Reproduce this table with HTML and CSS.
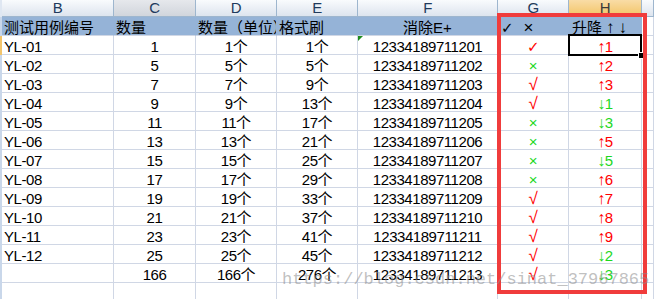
FILE: index.html
```html
<!DOCTYPE html>
<html lang="zh">
<head>
<meta charset="utf-8">
<title>Sheet</title>
<link rel="stylesheet" href="styles.css">
</head>
<body>
<div class="sheet">
  <div class="row colhead">
    <div class="cell">B</div><div class="cell hov">C</div><div class="cell">D</div><div class="cell">E</div><div class="cell">F</div><div class="cell">G</div><div class="cell sel">H</div><div class="cell"></div>
  </div>
  <div class="row head">
    <div class="cell">测试用例编号</div>
    <div class="cell">数量</div>
    <div class="cell">数量（单位）</div>
    <div class="cell">格式刷</div>
    <div class="cell ctr">消除E+</div>
    <div class="cell gh"><span class="tick">✓</span><span class="cross">×</span></div>
    <div class="cell hh">升降<b class="ar">↑</b><b class="ar">↓</b></div>
    <div class="cell plain"></div>
  </div>

  <div class="row active">
    <div class="cell">YL-01</div><div class="cell ctr">1</div><div class="cell ctr">1个</div><div class="cell ctr">1个</div><div class="cell ctr err">12334189711201</div><div class="cell ctr red"><span class="tick">✓</span></div><div class="cell ctr red"><span class="ar">↑</span>1</div><div class="cell"></div>
  </div>
  <div class="row">
    <div class="cell">YL-02</div><div class="cell ctr">5</div><div class="cell ctr">5个</div><div class="cell ctr">5个</div><div class="cell ctr">12334189711202</div><div class="cell ctr green">×</div><div class="cell ctr red"><span class="ar">↑</span>2</div><div class="cell"></div>
  </div>
  <div class="row">
    <div class="cell">YL-03</div><div class="cell ctr">7</div><div class="cell ctr">7个</div><div class="cell ctr">9个</div><div class="cell ctr">12334189711203</div><div class="cell ctr red ok">√</div><div class="cell ctr red"><span class="ar">↑</span>3</div><div class="cell"></div>
  </div>
  <div class="row">
    <div class="cell">YL-04</div><div class="cell ctr">9</div><div class="cell ctr">9个</div><div class="cell ctr">13个</div><div class="cell ctr">12334189711204</div><div class="cell ctr red ok">√</div><div class="cell ctr green"><span class="ar">↓</span>1</div><div class="cell"></div>
  </div>
  <div class="row">
    <div class="cell">YL-05</div><div class="cell ctr">11</div><div class="cell ctr">11个</div><div class="cell ctr">17个</div><div class="cell ctr">12334189711205</div><div class="cell ctr green">×</div><div class="cell ctr green"><span class="ar">↓</span>3</div><div class="cell"></div>
  </div>
  <div class="row">
    <div class="cell">YL-06</div><div class="cell ctr">13</div><div class="cell ctr">13个</div><div class="cell ctr">21个</div><div class="cell ctr">12334189711206</div><div class="cell ctr green">×</div><div class="cell ctr red"><span class="ar">↑</span>5</div><div class="cell"></div>
  </div>
  <div class="row">
    <div class="cell">YL-07</div><div class="cell ctr">15</div><div class="cell ctr">15个</div><div class="cell ctr">25个</div><div class="cell ctr">12334189711207</div><div class="cell ctr green">×</div><div class="cell ctr green"><span class="ar">↓</span>5</div><div class="cell"></div>
  </div>
  <div class="row">
    <div class="cell">YL-08</div><div class="cell ctr">17</div><div class="cell ctr">17个</div><div class="cell ctr">29个</div><div class="cell ctr">12334189711208</div><div class="cell ctr green">×</div><div class="cell ctr red"><span class="ar">↑</span>6</div><div class="cell"></div>
  </div>
  <div class="row">
    <div class="cell">YL-09</div><div class="cell ctr">19</div><div class="cell ctr">19个</div><div class="cell ctr">33个</div><div class="cell ctr">12334189711209</div><div class="cell ctr red ok">√</div><div class="cell ctr red"><span class="ar">↑</span>7</div><div class="cell"></div>
  </div>
  <div class="row">
    <div class="cell">YL-10</div><div class="cell ctr">21</div><div class="cell ctr">21个</div><div class="cell ctr">37个</div><div class="cell ctr">12334189711210</div><div class="cell ctr red ok">√</div><div class="cell ctr red"><span class="ar">↑</span>8</div><div class="cell"></div>
  </div>
  <div class="row">
    <div class="cell">YL-11</div><div class="cell ctr">23</div><div class="cell ctr">23个</div><div class="cell ctr">41个</div><div class="cell ctr">12334189711211</div><div class="cell ctr red ok">√</div><div class="cell ctr red"><span class="ar">↑</span>9</div><div class="cell"></div>
  </div>
  <div class="row">
    <div class="cell">YL-12</div><div class="cell ctr">25</div><div class="cell ctr">25个</div><div class="cell ctr">45个</div><div class="cell ctr">12334189711212</div><div class="cell ctr red ok">√</div><div class="cell ctr green"><span class="ar">↓</span>2</div><div class="cell"></div>
  </div>
  <div class="row">
    <div class="cell"></div><div class="cell ctr">166</div><div class="cell ctr">166个</div><div class="cell ctr">276个</div><div class="cell ctr">12334189711213</div><div class="cell ctr red ok">√</div><div class="cell ctr green"><span class="ar">↓</span>3</div><div class="cell"></div>
  </div>
  <div class="row">
    <div class="cell"></div><div class="cell"></div><div class="cell"></div><div class="cell"></div><div class="cell"></div><div class="cell"></div><div class="cell"></div><div class="cell"></div>
  </div>

  <div class="selbox"><span class="handle"></span></div>
  <div class="frame"></div>
  <div class="watermark">https://blog.csdn.net/sinat_37967865</div>
</div>
</body>
</html>
```

FILE: styles.css
```css
html, body {
  margin: 0;
  padding: 0;
  overflow: hidden;
  background: #fff;
}

.sheet {
  position: relative;
  width: 654px;
  height: 299px;
  overflow: hidden;
  font-family: "Liberation Sans", "Noto Sans CJK SC", sans-serif;
  font-size: 15px;
  letter-spacing: -0.45px;
  color: #000;
}

.row {
  display: grid;
  grid-template-columns: 112px 82px 81px 81px 140px 71px 73px 12px;
  height: 19px;
  border-left: 2px solid #c9d7ea;
}

.row.active {
  border-left-color: #f2c46c;
}

.cell {
  box-sizing: border-box;
  height: 19px;
  border-right: 1px solid #d0d7e5;
  border-bottom: 1px solid #d0d7e5;
  padding: 2px 2px 0 2px;
  line-height: 17px;
  white-space: nowrap;
  overflow: hidden;
  position: relative;
}

.ctr {
  text-align: center;
}

/* column letters */
.colhead {
  height: 17px;
  border-left-color: #dfe7f2;
}

.colhead .cell {
  height: 17px;
  padding-top: 0;
  line-height: 16px;
  text-align: center;
  color: #213a5c;
  background: linear-gradient(#f9fbfd, #dde4ee);
  border-right-color: #9eb6ce;
  border-bottom-color: #9eb6ce;
}

.colhead .hov {
  background: linear-gradient(#e6e8ec, #d1d5dc);
}

.colhead .sel {
  background: linear-gradient(#f9dca6, #f2c466);
  color: #3a3a3a;
}

/* blue title row */
.head .cell {
  background: #95b3d7;
  border-right-color: #95b3d7;
  border-bottom-color: #d0d7e5;
  letter-spacing: 0;
}

.head .plain {
  background: #fff;
  border-right-color: #d0d7e5;
}

.head .gh {
  padding-left: 3px;
}

.head .gh .tick {
  margin-right: 10px;
}

.head .hh {
  padding-left: 3px;
}

.head .hh .ar {
  margin-left: 4px;
  font-size: 17px;
  font-weight: bold;
}

.tick {
  font-family: "DejaVu Sans", sans-serif;
  font-size: 15px;
  font-weight: normal;
}

.cross {
  font-size: 17px;
}

.red {
  color: #ff0000;
}

.green {
  color: #1ed81e;
}

.ok {
  font-family: "Liberation Sans", sans-serif;
  font-size: 17px;
}

.ar {
  font-size: 16px;
  font-weight: normal;
}

/* green error triangle */
.err::before {
  content: "";
  position: absolute;
  left: 0;
  top: 0;
  border-top: 5px solid #1e8c1e;
  border-right: 5px solid transparent;
}

/* active cell outline */
.selbox {
  position: absolute;
  left: 568px;
  top: 34px;
  width: 70px;
  height: 18px;
  border: 2px solid #000;
}

.handle {
  position: absolute;
  right: -5px;
  bottom: -5px;
  width: 5px;
  height: 5px;
  background: #000;
  border: 1px solid #fff;
}

/* red annotation frame */
.frame {
  position: absolute;
  left: 497px;
  top: 13px;
  width: 142px;
  height: 273px;
  border: 4px solid #f03c3c;
}

.watermark {
  position: absolute;
  left: 282px;
  top: 271px;
  font-family: "Liberation Mono", monospace;
  font-size: 17px;
  line-height: 17px;
  letter-spacing: 0;
  color: rgba(140, 140, 140, 0.55);
  white-space: nowrap;
}
```
